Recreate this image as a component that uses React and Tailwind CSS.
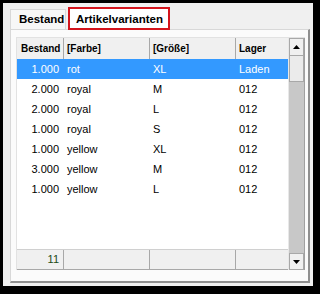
import React from "react";

const rows = [
  { qty: "1.000", farbe: "rot", size: "XL", lager: "Laden", selected: true },
  { qty: "2.000", farbe: "royal", size: "M", lager: "012" },
  { qty: "2.000", farbe: "royal", size: "L", lager: "012" },
  { qty: "1.000", farbe: "royal", size: "S", lager: "012" },
  { qty: "1.000", farbe: "yellow", size: "XL", lager: "012" },
  { qty: "3.000", farbe: "yellow", size: "M", lager: "012" },
  { qty: "1.000", farbe: "yellow", size: "L", lager: "012" },
];

function Arrow({ up }) {
  return (
    <svg width="7" height="4" viewBox="0 0 7 4">
      {up ? <polygon points="3.5,0 7,4 0,4" fill="#000" /> : <polygon points="0,0 7,0 3.5,4" fill="#000" />}
    </svg>
  );
}

export default function App() {
  return (
    <div
      className="w-[320px] h-[294px] bg-black pt-[3px] pl-[3px] pr-[7px] pb-[8px]"
      style={{ fontFamily: '"Liberation Sans", Arial, sans-serif' }}
    >
      <div className="w-full h-full bg-[#f0f0f0] flex flex-col pl-[7px] pr-[3px] pt-[4px] pb-[3px]">
        {/* tabs */}
        <div className="flex items-end h-[22px] relative z-10">
          <div className="w-[56px] h-[20px] border-l border-t border-r border-[#d8d8d8] bg-[#f7f7f7] flex items-center pl-[8px] pt-[1px] text-[11.5px] font-bold text-black">
            Bestand
          </div>
          <div className="ml-[2px] w-[102px] h-[23px] border-2 border-[#d4141c] bg-white flex items-start pt-[2px] pl-[6px] text-[11.5px] font-bold text-black -mb-[1px]">
            Artikelvarianten
          </div>
        </div>

        {/* panel */}
        <div className="flex-1 flex flex-col bg-[#fbfbfb] border-l border-t border-[#d8d8d8] border-r-2 border-r-[#8f8f8f] border-b-2 border-b-[#8f8f8f] pl-[5px] pt-[7px] pr-[3px] pb-[11px]">
          <div className="flex-1 flex border-l border-t border-[#e2e2e2] bg-white">
            <div className="flex-1 flex flex-col">
              {/* header */}
              <div className="flex h-[21px] bg-[#f0f0f0] text-[10px] font-bold text-black">
                <div className="w-[47px] border-r border-[#a8a8a8] pl-[4px] flex items-center">Bestand</div>
                <div className="w-[86px] border-r border-[#a8a8a8] pl-[3px] flex items-center">[Farbe]</div>
                <div className="w-[86px] border-r border-[#a8a8a8] pl-[3px] flex items-center">[Größe]</div>
                <div className="flex-1 pl-[3px] flex items-center">Lager</div>
              </div>

              {/* body */}
              <div className="flex-1 flex flex-col text-[11px]">
                {rows.map((r, i) => (
                  <div
                    key={i}
                    className={
                      r.selected
                        ? "flex h-[20px] items-center bg-[#3399ff] text-white"
                        : "flex h-[20px] items-center text-black"
                    }
                  >
                    <div className="w-[47px] text-right pr-[5px]">{r.qty}</div>
                    <div className="w-[86px] pl-[3px]">{r.farbe}</div>
                    <div className="w-[86px] pl-[3px]">{r.size}</div>
                    <div className="flex-1 pl-[3px]">{r.lager}</div>
                  </div>
                ))}
              </div>

              {/* footer */}
              <div className="flex h-[21px] bg-[#f0f0f0] border-t border-[#d0d0d0] border-b border-b-[#a8a8a8] text-[11px]">
                <div className="w-[47px] border-r border-[#a8a8a8] pr-[4px] flex items-center justify-end text-[#1d4a14]">11</div>
                <div className="w-[86px] border-r border-[#a8a8a8]"></div>
                <div className="w-[86px] border-r border-[#a8a8a8]"></div>
                <div className="flex-1"></div>
              </div>
            </div>

            {/* scrollbar */}
            <div className="w-[17px] flex flex-col bg-[#c8c8c8] border-l border-[#e8e8e8] border-r border-r-[#a0a0a0]">
              <div className="h-[18px] bg-[#f0f0f0] border border-[#a8a8a8] flex items-center justify-center">
                <Arrow up />
              </div>
              <div className="h-[26px] bg-[#ebebeb] border-x border-b border-[#a8a8a8]"></div>
              <div className="flex-1"></div>
              <div className="h-[17px] bg-[#f0f0f0] border border-[#a8a8a8] flex items-center justify-center">
                <Arrow />
              </div>
            </div>
          </div>
        </div>
      </div>
    </div>
  );
}
